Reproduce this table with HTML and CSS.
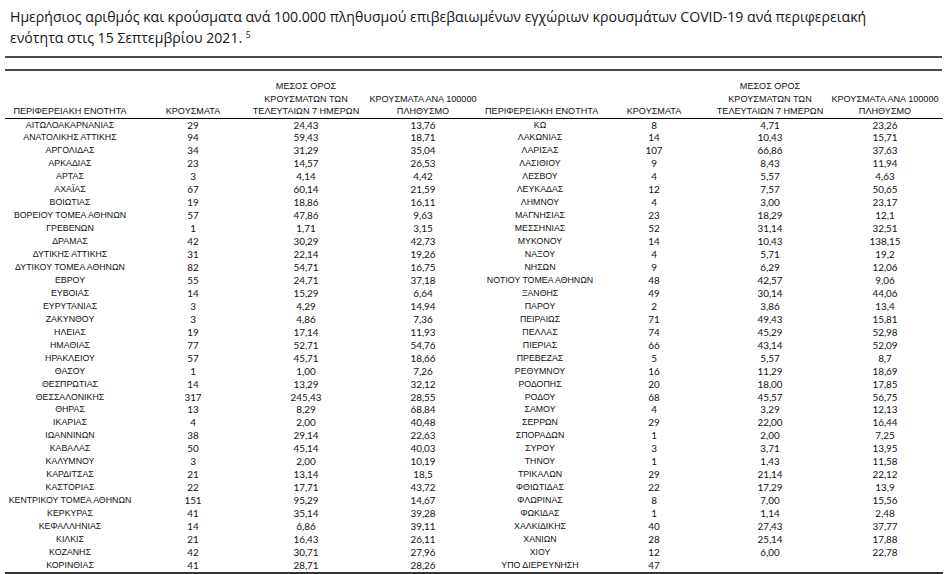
FILE: index.html
```html
<!DOCTYPE html>
<html lang="el">
<head>
<meta charset="utf-8">
<title>Κρούσματα COVID-19 ανά περιφερειακή ενότητα</title>
<link rel="stylesheet" href="styles.css">
</head>
<body>
<div class="page">
  <h1 class="title">Ημερήσιος αριθμός και κρούσματα ανά 100.000 πληθυσμού επιβεβαιωμένων εγχώριων κρουσμάτων COVID-19 ανά περιφερειακή<br>ενότητα στις 15 Σεπτεμβρίου 2021. <sup class="note">5</sup></h1>
  <div class="rule rule-top"></div>
  <div class="rule rule-second"></div>
  <table class="data">
    <colgroup>
      <col class="c-name-l"><col class="c-cases-l"><col class="c-avg-l"><col class="c-rate-l">
      <col class="c-name-r"><col class="c-cases-r"><col class="c-avg-r"><col class="c-rate-r">
    </colgroup>
    <thead>
      <tr>
        <th>ΠΕΡΙΦΕΡΕΙΑΚΗ ΕΝΟΤΗΤΑ</th>
        <th>ΚΡΟΥΣΜΑΤΑ</th>
        <th>ΜΕΣΟΣ ΟΡΟΣ<br>ΚΡΟΥΣΜΑΤΩΝ ΤΩΝ<br>ΤΕΛΕΥΤΑΙΩΝ 7 ΗΜΕΡΩΝ</th>
        <th>ΚΡΟΥΣΜΑΤΑ ΑΝΑ 100000<br>ΠΛΗΘΥΣΜΟ</th>
        <th>ΠΕΡΙΦΕΡΕΙΑΚΗ ΕΝΟΤΗΤΑ</th>
        <th>ΚΡΟΥΣΜΑΤΑ</th>
        <th>ΜΕΣΟΣ ΟΡΟΣ<br>ΚΡΟΥΣΜΑΤΩΝ ΤΩΝ<br>ΤΕΛΕΥΤΑΙΩΝ 7 ΗΜΕΡΩΝ</th>
        <th>ΚΡΟΥΣΜΑΤΑ ΑΝΑ 100000<br>ΠΛΗΘΥΣΜΟ</th>
      </tr>
    </thead>
    <tbody>
      <tr><td class="nm">ΑΙΤΩΛΟΑΚΑΡΝΑΝΙΑΣ</td><td>29</td><td>24,43</td><td>13,76</td><td class="nm">ΚΩ</td><td>8</td><td>4,71</td><td>23,26</td></tr>
      <tr><td class="nm">ΑΝΑΤΟΛΙΚΗΣ ΑΤΤΙΚΗΣ</td><td>94</td><td>59,43</td><td>18,71</td><td class="nm">ΛΑΚΩΝΙΑΣ</td><td>14</td><td>10,43</td><td>15,71</td></tr>
      <tr><td class="nm">ΑΡΓΟΛΙΔΑΣ</td><td>34</td><td>31,29</td><td>35,04</td><td class="nm">ΛΑΡΙΣΑΣ</td><td>107</td><td>66,86</td><td>37,63</td></tr>
      <tr><td class="nm">ΑΡΚΑΔΙΑΣ</td><td>23</td><td>14,57</td><td>26,53</td><td class="nm">ΛΑΣΙΘΙΟΥ</td><td>9</td><td>8,43</td><td>11,94</td></tr>
      <tr><td class="nm">ΑΡΤΑΣ</td><td>3</td><td>4,14</td><td>4,42</td><td class="nm">ΛΕΣΒΟΥ</td><td>4</td><td>5,57</td><td>4,63</td></tr>
      <tr><td class="nm">ΑΧΑΪΑΣ</td><td>67</td><td>60,14</td><td>21,59</td><td class="nm">ΛΕΥΚΑΔΑΣ</td><td>12</td><td>7,57</td><td>50,65</td></tr>
      <tr><td class="nm">ΒΟΙΩΤΙΑΣ</td><td>19</td><td>18,86</td><td>16,11</td><td class="nm">ΛΗΜΝΟΥ</td><td>4</td><td>3,00</td><td>23,17</td></tr>
      <tr><td class="nm">ΒΟΡΕΙΟΥ ΤΟΜΕΑ ΑΘΗΝΩΝ</td><td>57</td><td>47,86</td><td>9,63</td><td class="nm">ΜΑΓΝΗΣΙΑΣ</td><td>23</td><td>18,29</td><td>12,1</td></tr>
      <tr><td class="nm">ΓΡΕΒΕΝΩΝ</td><td>1</td><td>1,71</td><td>3,15</td><td class="nm">ΜΕΣΣΗΝΙΑΣ</td><td>52</td><td>31,14</td><td>32,51</td></tr>
      <tr><td class="nm">ΔΡΑΜΑΣ</td><td>42</td><td>30,29</td><td>42,73</td><td class="nm">ΜΥΚΟΝΟΥ</td><td>14</td><td>10,43</td><td>138,15</td></tr>
      <tr><td class="nm">ΔΥΤΙΚΗΣ ΑΤΤΙΚΗΣ</td><td>31</td><td>22,14</td><td>19,26</td><td class="nm">ΝΑΞΟΥ</td><td>4</td><td>5,71</td><td>19,2</td></tr>
      <tr><td class="nm">ΔΥΤΙΚΟΥ ΤΟΜΕΑ ΑΘΗΝΩΝ</td><td>82</td><td>54,71</td><td>16,75</td><td class="nm">ΝΗΣΩΝ</td><td>9</td><td>6,29</td><td>12,06</td></tr>
      <tr><td class="nm">ΕΒΡΟΥ</td><td>55</td><td>24,71</td><td>37,18</td><td class="nm">ΝΟΤΙΟΥ ΤΟΜΕΑ ΑΘΗΝΩΝ</td><td>48</td><td>42,57</td><td>9,06</td></tr>
      <tr><td class="nm">ΕΥΒΟΙΑΣ</td><td>14</td><td>15,29</td><td>6,64</td><td class="nm">ΞΑΝΘΗΣ</td><td>49</td><td>30,14</td><td>44,06</td></tr>
      <tr><td class="nm">ΕΥΡΥΤΑΝΙΑΣ</td><td>3</td><td>4,29</td><td>14,94</td><td class="nm">ΠΑΡΟΥ</td><td>2</td><td>3,86</td><td>13,4</td></tr>
      <tr><td class="nm">ΖΑΚΥΝΘΟΥ</td><td>3</td><td>4,86</td><td>7,36</td><td class="nm">ΠΕΙΡΑΙΩΣ</td><td>71</td><td>49,43</td><td>15,81</td></tr>
      <tr><td class="nm">ΗΛΕΙΑΣ</td><td>19</td><td>17,14</td><td>11,93</td><td class="nm">ΠΕΛΛΑΣ</td><td>74</td><td>45,29</td><td>52,98</td></tr>
      <tr><td class="nm">ΗΜΑΘΙΑΣ</td><td>77</td><td>52,71</td><td>54,76</td><td class="nm">ΠΙΕΡΙΑΣ</td><td>66</td><td>43,14</td><td>52,09</td></tr>
      <tr><td class="nm">ΗΡΑΚΛΕΙΟΥ</td><td>57</td><td>45,71</td><td>18,66</td><td class="nm">ΠΡΕΒΕΖΑΣ</td><td>5</td><td>5,57</td><td>8,7</td></tr>
      <tr><td class="nm">ΘΑΣΟΥ</td><td>1</td><td>1,00</td><td>7,26</td><td class="nm">ΡΕΘΥΜΝΟΥ</td><td>16</td><td>11,29</td><td>18,69</td></tr>
      <tr><td class="nm">ΘΕΣΠΡΩΤΙΑΣ</td><td>14</td><td>13,29</td><td>32,12</td><td class="nm">ΡΟΔΟΠΗΣ</td><td>20</td><td>18,00</td><td>17,85</td></tr>
      <tr><td class="nm">ΘΕΣΣΑΛΟΝΙΚΗΣ</td><td>317</td><td>245,43</td><td>28,55</td><td class="nm">ΡΟΔΟΥ</td><td>68</td><td>45,57</td><td>56,75</td></tr>
      <tr><td class="nm">ΘΗΡΑΣ</td><td>13</td><td>8,29</td><td>68,84</td><td class="nm">ΣΑΜΟΥ</td><td>4</td><td>3,29</td><td>12,13</td></tr>
      <tr><td class="nm">ΙΚΑΡΙΑΣ</td><td>4</td><td>2,00</td><td>40,48</td><td class="nm">ΣΕΡΡΩΝ</td><td>29</td><td>22,00</td><td>16,44</td></tr>
      <tr><td class="nm">ΙΩΑΝΝΙΝΩΝ</td><td>38</td><td>29,14</td><td>22,63</td><td class="nm">ΣΠΟΡΑΔΩΝ</td><td>1</td><td>2,00</td><td>7,25</td></tr>
      <tr><td class="nm">ΚΑΒΑΛΑΣ</td><td>50</td><td>45,14</td><td>40,03</td><td class="nm">ΣΥΡΟΥ</td><td>3</td><td>3,71</td><td>13,95</td></tr>
      <tr><td class="nm">ΚΑΛΥΜΝΟΥ</td><td>3</td><td>2,00</td><td>10,19</td><td class="nm">ΤΗΝΟΥ</td><td>1</td><td>1,43</td><td>11,58</td></tr>
      <tr><td class="nm">ΚΑΡΔΙΤΣΑΣ</td><td>21</td><td>13,14</td><td>18,5</td><td class="nm">ΤΡΙΚΑΛΩΝ</td><td>29</td><td>21,14</td><td>22,12</td></tr>
      <tr><td class="nm">ΚΑΣΤΟΡΙΑΣ</td><td>22</td><td>17,71</td><td>43,72</td><td class="nm">ΦΘΙΩΤΙΔΑΣ</td><td>22</td><td>17,29</td><td>13,9</td></tr>
      <tr><td class="nm">ΚΕΝΤΡΙΚΟΥ ΤΟΜΕΑ ΑΘΗΝΩΝ</td><td>151</td><td>95,29</td><td>14,67</td><td class="nm">ΦΛΩΡΙΝΑΣ</td><td>8</td><td>7,00</td><td>15,56</td></tr>
      <tr><td class="nm">ΚΕΡΚΥΡΑΣ</td><td>41</td><td>35,14</td><td>39,28</td><td class="nm">ΦΩΚΙΔΑΣ</td><td>1</td><td>1,14</td><td>2,48</td></tr>
      <tr><td class="nm">ΚΕΦΑΛΛΗΝΙΑΣ</td><td>14</td><td>6,86</td><td>39,11</td><td class="nm">ΧΑΛΚΙΔΙΚΗΣ</td><td>40</td><td>27,43</td><td>37,77</td></tr>
      <tr><td class="nm">ΚΙΛΚΙΣ</td><td>21</td><td>16,43</td><td>26,11</td><td class="nm">ΧΑΝΙΩΝ</td><td>28</td><td>25,14</td><td>17,88</td></tr>
      <tr><td class="nm">ΚΟΖΑΝΗΣ</td><td>42</td><td>30,71</td><td>27,96</td><td class="nm">ΧΙΟΥ</td><td>12</td><td>6,00</td><td>22,78</td></tr>
      <tr><td class="nm">ΚΟΡΙΝΘΙΑΣ</td><td>41</td><td>28,71</td><td>28,26</td><td class="nm">ΥΠΟ ΔΙΕΡΕΥΝΗΣΗ</td><td>47</td><td></td><td></td></tr>
    </tbody>
  </table>
</div>
</body>
</html>
```

FILE: styles.css
```css
html, body {
  margin: 0;
  padding: 0;
  background: #ffffff;
}

.page {
  color: #111;
  padding-top: 6px;
}

.title {
  margin: 0 0 0 10px;
  font-family: "Open Sans", "Noto Sans", "Liberation Sans", sans-serif;
  font-weight: 400;
  font-size: 14.1px;
  line-height: 21px;
  color: #151515;
}

.note {
  font-size: 8.5px;
  vertical-align: 5px;
  line-height: 0;
}

.rule {
  margin-left: 5px;
  width: 937px;
  border-top: 2px solid #4a4a4a;
}

.rule-top {
  margin-top: 8px;
}

.rule-second {
  margin-top: 11px;
}

.data {
  margin: 9px 0 0 5px;
  width: 938px;
  border-collapse: collapse;
  table-layout: fixed;
}

.c-name-l { width: 130px; }
.c-cases-l { width: 116px; }
.c-avg-l { width: 110px; }
.c-rate-l { width: 124px; }
.c-name-r { width: 110px; }
.c-cases-r { width: 118px; }
.c-avg-r { width: 114px; }
.c-rate-r { width: 116px; }

.data th {
  font-family: "Liberation Sans", Arial, sans-serif;
  font-weight: 400;
  font-size: 9.1px;
  line-height: 12.5px;
  text-align: center;
  vertical-align: bottom;
  white-space: nowrap;
  padding: 0;
  color: #111;
  border-bottom: 1px solid #000;
}

.data td {
  font-family: Lato, "Liberation Sans", sans-serif;
  font-size: 9.9px;
  height: 12.95px;
  line-height: 12.95px;
  padding: 0;
  text-align: center;
  white-space: nowrap;
  color: #111;
}

.data td.nm {
  font-family: "Liberation Sans", Arial, sans-serif;
  font-size: 8.8px;
}

.data tbody tr:last-child td {
  border-bottom: 2px solid #333;
}
```
